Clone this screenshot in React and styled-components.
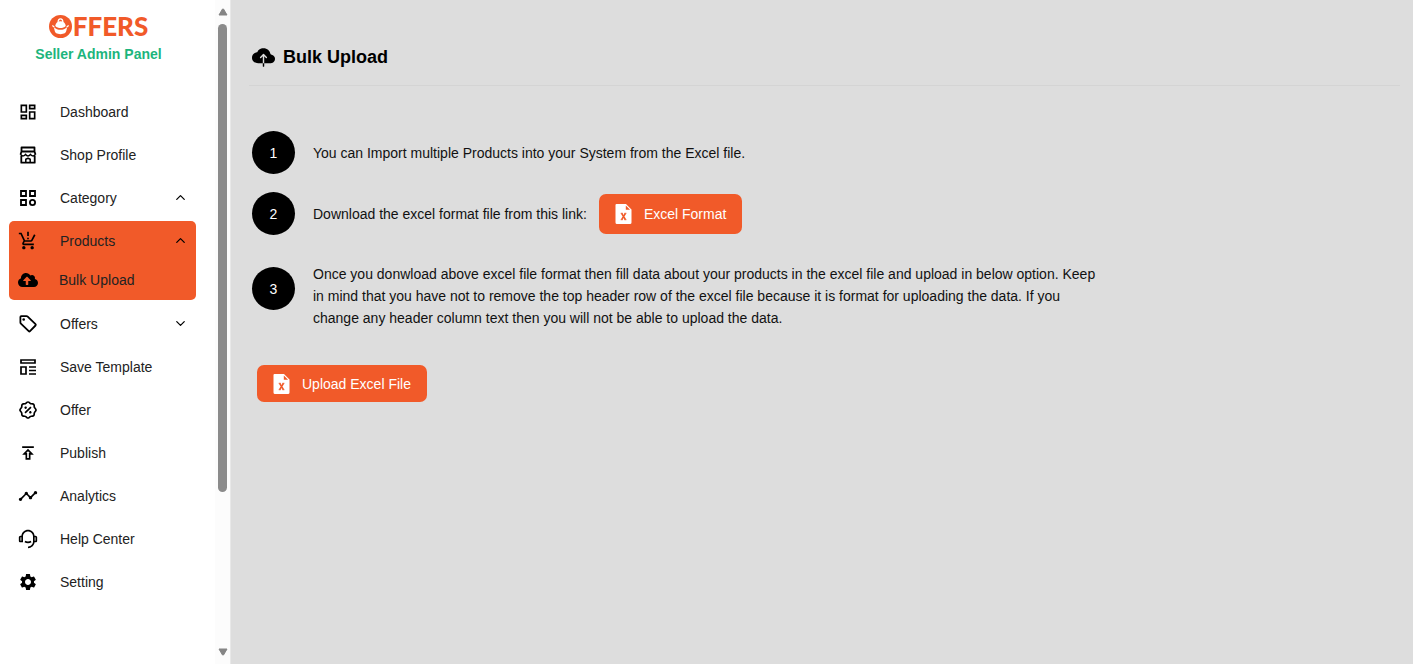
import React from 'react';
import styled, { createGlobalStyle } from 'styled-components';
import { MdOutlineDashboard, MdProductionQuantityLimits, MdOutlinePublish, MdTimeline, MdSettings } from 'react-icons/md';
import { RiCustomerService2Line, RiDiscountPercentLine } from 'react-icons/ri';
import { FaCloudUploadAlt } from 'react-icons/fa';
import { IoCloudUpload } from 'react-icons/io5';
import { ChevronUp, ChevronDown } from 'lucide-react';

const GlobalStyle = createGlobalStyle`
  * { box-sizing: border-box; }
  body { margin: 0; background: #ddd; color: #111; font-family: "Liberation Sans", Arial, sans-serif; font-size: 14px; }
`;

const Page = styled.div`
  display: flex;
  min-height: 100vh;
`;

const Sidebar = styled.aside`
  flex: 0 0 231px;
  display: flex;
  justify-content: space-between;
  background: #fff;
  border-right: 1px solid #e8e8e8;
`;

const SidebarBody = styled.div`
  width: 196px;
  padding: 12px 0 0 9px;
`;

const Brand = styled.header`
  display: flex;
  flex-direction: column;
  align-items: center;
  height: 78px;
  padding-right: 8px;
`;

const Logo = styled.a`
  display: flex;
  align-items: center;
  gap: 1px;
  height: 28px;
  color: #f15a29;
  font: 900 26px/28px Lato, sans-serif;
  text-decoration: none;
`;

const BrandCaption = styled.strong`
  line-height: 28px;
  color: #1cb57c;
  white-space: nowrap;
`;

const NavItem = styled.a`
  display: flex;
  align-items: center;
  height: ${(p) => (p.$compact ? 39 : 43)}px;
  padding: 0 8px;
  color: #222;
  text-decoration: none;
`;

const NavIcon = styled.span`
  display: flex;
  justify-content: center;
  width: 22px;
  margin-right: ${(p) => (p.$tight ? 20 : 21)}px;
  color: #000;
`;

const NavLabel = styled.span`
  flex: 1;
`;

const ActiveGroup = styled.div`
  margin: 2px 0;
  padding-bottom: 1px;
  border-radius: 5px;
  background: #f15a29;
`;

const ScrollTrack = styled.div`
  display: flex;
  flex-direction: column;
  align-items: center;
  width: 15px;
  height: 100vh;
  padding: 8px 0;
  background: #fcfcfc;
`;

const ScrollRail = styled.div`
  flex: 1;
  width: 9px;
  margin: 8px 0;
`;

const ScrollThumb = styled.div`
  height: 76%;
  border-radius: 5px;
  background: #8b8b8b;
`;

const Main = styled.main`
  flex: 1;
  min-width: 0;
  padding: 29px 13px 29px 18px;
`;

const TitleBar = styled.header`
  display: flex;
  align-items: center;
  gap: 8px;
  height: 57px;
  padding-left: 3px;
  border-bottom: 1px solid #d4d4d4;
`;

const Title = styled.h1`
  margin: 0;
  color: #000;
  font-size: 18px;
`;

const Steps = styled.ol`
  display: flex;
  flex-direction: column;
  gap: 18px;
  max-width: 852px;
  margin: 45px 0 0;
  padding: 0 0 0 3px;
  list-style: none;
`;

const Step = styled.li`
  display: flex;
  align-items: ${(p) => (p.$multiline ? 'flex-start' : 'center')};
  gap: 18px;
  padding-top: ${(p) => (p.$multiline ? 14 : 0)}px;
`;

const StepNumber = styled.span`
  flex: none;
  display: grid;
  place-items: center;
  width: 43px;
  height: 43px;
  border-radius: 50%;
  background: #000;
  color: #fff;
`;

const StepText = styled.div`
  display: flex;
  align-items: center;
  gap: 12px;
`;

const StepParagraph = styled.p`
  margin: -4px 0 10px;
  line-height: 22px;
`;

const Button = styled.button`
  display: flex;
  align-items: center;
  gap: 12px;
  height: ${(p) => (p.$tall ? 40 : 37)}px;
  padding: 0 16px;
  border: 0;
  border-radius: 7px;
  background: #f15a29;
  color: #fff;
  font: inherit;
  white-space: nowrap;
`;

const UploadArea = styled.div`
  display: flex;
  padding: 26px 8px;
`;

const LogoMark = () => (
  <svg width="23" height="23" viewBox="0 0 24 24" aria-hidden="true">
    <circle cx="12" cy="12" r="12" fill="#f15a29" />
    <path d="M5 12.500c4 4 10 4 14 0l-.8 3.500c-.6 2.800-2.200 4-6.200 4s-5.600-1.200-6.200-4z" fill="#fff" />
    <path d="M6.500 11.500c.5-3.500 2.200-5 5.500-5s5 1.500 5.500 5c-3 2.800-8 2.800-11 0z" fill="#fff" />
    <path d="M9.500 7.500c0-4.500 5-4.500 5 0" fill="none" stroke="#fff" strokeWidth="1.300" />
    <path d="M3.500 11l2 1.500M20.500 11l-2 1.500" fill="none" stroke="#fff" strokeWidth="1.300" />
  </svg>
);

const ExcelIcon = () => (
  <svg width="17" height="20" viewBox="0 0 17 20" aria-hidden="true">
    <path d="M1.500 0H11l5.500 5.500v13a1.500 1.500 0 0 1-1.500 1.500H2a1.500 1.500 0 0 1-1.500-1.500V1a1 1 0 0 1 1-1z" fill="#fff" />
    <path d="M10.800 1.500v4.300h4.300z" fill="#f15a29" />
    <path d="M6.700 9.500l3.700 6M10.400 9.500l-3.700 6" fill="none" stroke="#f15a29" strokeWidth="1.500" />
    <path d="M5.700 9.300h2M9.400 9.300h2M5.700 15.700h2M9.400 15.700h2" fill="none" stroke="#f15a29" />
  </svg>
);

const Arrow = ({ down }) => (
  <svg width="10" height="8" viewBox="0 0 10 8" aria-hidden="true">
    <path d={down ? 'M1 1h8L5.500 7h-1z' : 'M1 7h8L5.500 1h-1z'} fill="#858585" stroke="#858585" strokeLinejoin="round" />
  </svg>
);

const LineIcon = ({ size, children }) => (
  <svg width={size} height={size} viewBox="0 0 20 20" fill="none" stroke="currentColor" strokeWidth="1.800" strokeLinejoin="round" aria-hidden="true">
    {children}
  </svg>
);

const ShopIcon = ({ size }) => (
  <LineIcon size={size}>
    <path d="M3.500 2.500h13v4h-13zM3.500 6.500L2.500 9.500M16.500 6.500l1 3" />
    <path d="M2.500 9.300c.8 2.200 4 2.200 5 0 .8 2.200 4.200 2.200 5 0 1 2.200 4.200 2.200 5 0" strokeWidth="1.500" />
    <path d="M3.300 11v6.700h13.400V11" />
    <path d="M7.800 17.500v-3.200l2.200-1 2.200 1v3.200" strokeWidth="1.500" />
  </LineIcon>
);

const CategoryIcon = ({ size }) => (
  <LineIcon size={size}>
    <path d="M3 3h5v5H3zM12 3h5v5h-5zM3 12h5v5H3z" strokeLinejoin="miter" />
    <circle cx="14.500" cy="14.500" r="2.600" />
  </LineIcon>
);

const TagIcon = ({ size }) => (
  <LineIcon size={size}>
    <path d="M3.200 2.200h5.300c.5 0 .9.200 1.200.5l7.800 7.500c.4.400.4.900 0 1.300l-5.500 5.700c-.4.400-.9.400-1.300 0L2.900 9.700c-.3-.3-.5-.7-.5-1.200V3c0-.5.300-.8.800-.8z" />
    <circle cx="5.700" cy="5.500" r="1.300" fill="currentColor" stroke="none" />
  </LineIcon>
);

const TemplateIcon = ({ size }) => (
  <LineIcon size={size}>
    <path d="M3 3h14v3H3zM3 10h5v7H3zM11 10h7M11 13.500h7M11 17h7" strokeWidth="1.700" strokeLinejoin="miter" />
  </LineIcon>
);

const topItems = [
  { label: 'Dashboard', Icon: MdOutlineDashboard },
  { label: 'Shop Profile', Icon: ShopIcon },
  { label: 'Category', Icon: CategoryIcon, Chevron: ChevronUp },
];

const bottomItems = [
  { label: 'Offers', Icon: TagIcon, Chevron: ChevronDown },
  { label: 'Save Template', Icon: TemplateIcon },
  { label: 'Offer', Icon: RiDiscountPercentLine },
  { label: 'Publish', Icon: MdOutlinePublish },
  { label: 'Analytics', Icon: MdTimeline },
  { label: 'Help Center', Icon: RiCustomerService2Line },
  { label: 'Setting', Icon: MdSettings },
];

function Item({ label, Icon, Chevron, compact, tight }) {
  return (
    <NavItem href="#" $compact={compact}>
      <NavIcon $tight={tight}><Icon size={20} /></NavIcon>
      <NavLabel>{label}</NavLabel>
      {Chevron && <Chevron size={15} color="#000" />}
    </NavItem>
  );
}

export default function App() {
  return (
    <Page>
      <GlobalStyle />
      <Sidebar>
        <SidebarBody>
          <Brand>
            <Logo href="#" aria-label="Offers"><LogoMark />FFERS</Logo>
            <BrandCaption>Seller Admin Panel</BrandCaption>
          </Brand>
          <nav>
            {topItems.map((item) => <Item key={item.label} {...item} />)}
            <ActiveGroup>
              <Item label="Products" Icon={MdProductionQuantityLimits} Chevron={ChevronUp} compact />
              <Item label="Bulk Upload" Icon={FaCloudUploadAlt} compact tight />
            </ActiveGroup>
            {bottomItems.map((item) => <Item key={item.label} {...item} />)}
          </nav>
        </SidebarBody>
        <ScrollTrack aria-hidden="true">
          <Arrow />
          <ScrollRail><ScrollThumb /></ScrollRail>
          <Arrow down />
        </ScrollTrack>
      </Sidebar>
      <Main>
        <TitleBar>
          <IoCloudUpload size={23} color="#000" />
          <Title>Bulk Upload</Title>
        </TitleBar>
        <Steps>
          <Step>
            <StepNumber>1</StepNumber>
            <StepText>You can Import multiple Products into your System from the Excel file.</StepText>
          </Step>
          <Step>
            <StepNumber>2</StepNumber>
            <StepText>
              Download the excel format file from this link:
              <Button type="button" $tall><ExcelIcon />Excel Format</Button>
            </StepText>
          </Step>
          <Step $multiline>
            <StepNumber>3</StepNumber>
            <StepParagraph>
              Once you donwload above excel file format then fill data about your products in the excel file and upload in below option. Keep in mind that you have not to remove the top header row of the excel file because it is format for uploading the data. If you change any header column text then you will not be able to upload the data.
            </StepParagraph>
          </Step>
        </Steps>
        <UploadArea>
          <Button type="button"><ExcelIcon />Upload Excel File</Button>
        </UploadArea>
      </Main>
    </Page>
  );
}
